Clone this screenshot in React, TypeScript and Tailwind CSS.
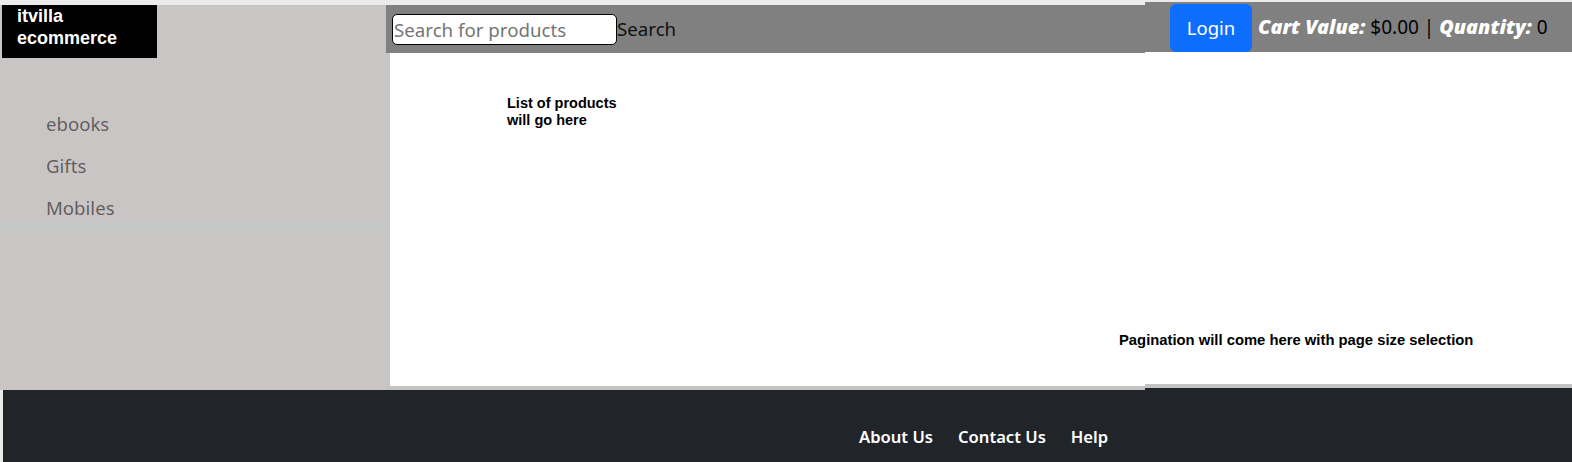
import React from "react";

export default function App() {
  const seg = { fontFamily: '"Noto Sans", "Open Sans", sans-serif' };
  return (
    <div
      className="w-[1572px] h-[462px] overflow-hidden bg-[#ebebeb] flex flex-col"
      style={{ fontFamily: '"Liberation Sans", Arial, sans-serif' }}
    >
      <div className="flex h-[390px]">
        {/* Left column */}
        <div className="w-[386px] pt-[5px] flex flex-col">
          <div className="flex-1 bg-[#cac5c5] flex flex-col">
            <div className="ml-[2px] w-[155px] h-[53px] bg-black text-white font-bold text-[18px] leading-[22px] px-[15px]">
              itvilla
              <br />
              ecommerce
            </div>
            <div className="mt-[45px] pl-[46px] text-[18.6px] text-black/55" style={seg}>
              <div className="h-[42px] leading-[42px]">ebooks</div>
              <div className="h-[42px] leading-[42px]">Gifts</div>
              <div className="h-[34px] leading-[42px]">Mobiles</div>
            </div>
            <div className="h-[11px] bg-[#c5c6c6]" />
          </div>
        </div>

        {/* Middle column */}
        <div className="w-[759px] pt-[5px] flex flex-col">
          <div className="h-[48px] bg-[#808080] flex items-center pl-[6px]" style={seg}>
            <input
              className="w-[225px] h-[31px] border border-black rounded-[5px] bg-white text-[18.7px] px-[1px] placeholder:text-[#757575] outline-none"
              placeholder="Search for products"
              style={seg}
            />
            <span className="text-[18.7px] text-[#111]">Search</span>
          </div>
          <div className="h-[333px] flex">
            <div className="w-[4px] bg-[#cac5c5]" />
            <div className="flex-1 bg-white pt-[42px] pl-[117px]">
              <div className="w-[125px] font-bold text-[14.5px] leading-[17px] text-black">
                List of products will go here
              </div>
            </div>
          </div>
          <div className="h-[4px] bg-[#c3c3c3]" />
        </div>

        {/* Right column */}
        <div className="flex-1 pt-[2px] flex flex-col">
          <div className="h-[50px] bg-[#808080] flex items-end pl-[25px]" style={seg}>
            <button className="w-[82px] h-[48px] rounded-[6px] bg-[#0d6efd] text-white text-[18.5px]">
              Login
            </button>
            <div className="self-center ml-[6px] text-[19px] text-black whitespace-nowrap">
              <span className="text-white font-black italic text-[19.8px]">Cart Value:</span> $0.00 |{" "}
              <span className="text-white font-black italic text-[19.8px]">Quantity:</span> 0
            </div>
          </div>
          <div className="h-[332px] bg-white pt-[280px]">
            <div className="-ml-[26px] font-bold text-[14.8px] leading-[17px] text-black whitespace-nowrap">
              Pagination will come here with page size selection
            </div>
          </div>
          <div className="h-[4px] bg-[#c3c3c3]" />
          <div className="h-[2px] bg-[#212529]" />
        </div>
      </div>

      {/* Footer */}
      <div className="ml-[3px] flex-1 bg-[#212529] pt-[35px] pl-[856px]" style={seg}>
        <div className="flex gap-[25px] text-white font-semibold text-[16.6px] leading-[24px]">
          <span>About Us</span>
          <span>Contact Us</span>
          <span>Help</span>
        </div>
      </div>
    </div>
  );
}
